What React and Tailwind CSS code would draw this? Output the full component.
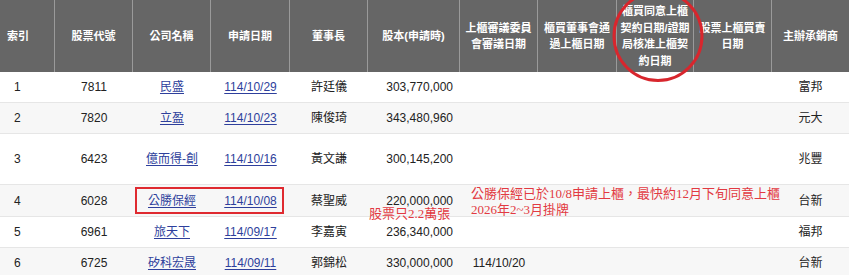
import React from "react";

const grid =
  "grid grid-cols-[55px_78px_78px_79px_78px_92px_78px_79px_77px_78px_77px]";

const headers = [
  ["索引"],
  ["股票代號"],
  ["公司名稱"],
  ["申請日期"],
  ["董事長"],
  ["股本(申請時)"],
  ["上櫃審議委員", "會審議日期"],
  ["櫃買董事會通", "過上櫃日期"],
  ["櫃買同意上櫃", "契約日期/證期", "局核准上櫃契", "約日期"],
  ["股票上櫃買賣", "日期"],
  ["主辦承銷商"],
];

const rows = [
  { idx: 1, code: "7811", name: "民盛", date: "114/10/29", chair: "許廷儀", cap: "303,770,000", review: "", uw: "富邦", h: "h-[31px]", bg: "bg-white" },
  { idx: 2, code: "7820", name: "立盈", date: "114/10/23", chair: "陳俊琦", cap: "343,480,960", review: "", uw: "元大", h: "h-[31px]", bg: "bg-[#f7f7f7]" },
  { idx: 3, code: "6423", name: "億而得-創", date: "114/10/16", chair: "黃文謙", cap: "300,145,200", review: "", uw: "兆豐", h: "h-[51px]", bg: "bg-white" },
  { idx: 4, code: "6028", name: "公勝保經", date: "114/10/08", chair: "蔡聖威", cap: "220,000,000", review: "", uw: "台新", h: "h-[32px]", bg: "bg-[#f7f7f7]" },
  { idx: 5, code: "6961", name: "旅天下", date: "114/09/17", chair: "李嘉寅", cap: "236,340,000", review: "", uw: "福邦", h: "h-[31px]", bg: "bg-white" },
  { idx: 6, code: "6725", name: "矽科宏晟", date: "114/09/11", chair: "郭錦松", cap: "330,000,000", review: "114/10/20", uw: "台新", h: "h-[31px]", bg: "bg-[#f7f7f7]" },
];

const Cell = ({ children, align = "justify-center" }) => (
  <div className={`flex items-center ${align}`}>{children}</div>
);

const Link = ({ children }) => (
  <span className="text-[#2e3f9c] underline underline-offset-2">{children}</span>
);

export default function App() {
  return (
    <div
      className="relative w-[849px] h-[275px] overflow-hidden bg-white text-[12px] text-[#222]"
      style={{ fontFamily: '"Liberation Sans", "Noto Sans CJK TC", sans-serif' }}
    >
      {/* header */}
      <div className={`${grid} h-[72px] bg-[#666666] text-white font-bold text-[11px] leading-[16.5px]`}>
        {headers.map((lines, i) => (
          <div
            key={i}
            className={`flex flex-col justify-center ${
              i === 0 ? "items-start pl-[7px]" : "items-center text-center"
            } ${i < headers.length - 1 ? "border-r border-[#9a9a9a]" : ""}`}
          >
            {lines.map((l) => (
              <span key={l}>{l}</span>
            ))}
          </div>
        ))}
      </div>

      {/* body */}
      {rows.map((r) => (
        <div key={r.idx} className={`${grid} ${r.h} ${r.bg} border-b border-[#e6e6e6]`}>
          <Cell align="justify-start pl-[14px]">{r.idx}</Cell>
          <Cell>{r.code}</Cell>
          <Cell>
            <Link>{r.name}</Link>
          </Cell>
          <Cell>
            <Link>{r.date}</Link>
          </Cell>
          <Cell>{r.chair}</Cell>
          <Cell align="justify-end pr-[7px]">{r.cap}</Cell>
          <Cell>{r.review}</Cell>
          <Cell />
          <Cell />
          <Cell />
          <Cell>{r.uw}</Cell>
        </div>
      ))}

      {/* annotations drawn over the table */}
      <div className="absolute left-[135px] top-[187px] w-[149px] h-[27px] border-2 border-[#df2a30]" />
      <svg
        className="absolute left-[608px] top-[-14px]"
        width="100"
        height="100"
        viewBox="0 0 100 100"
      >
        <ellipse cx="50" cy="50" rx="44" ry="44.5" fill="none" stroke="#d8262d" strokeWidth="3" />
      </svg>
      <div
        className="absolute left-[471px] top-[186px] text-[13px] leading-[16px] text-[#e23a42] whitespace-nowrap"
        style={{ fontFamily: '"Liberation Serif", "Noto Sans CJK TC", serif' }}
      >
        <div>公勝保經已於10/8申請上櫃，最快約12月下旬同意上櫃</div>
        <div>2026年2~3月掛牌</div>
      </div>
      <div
        className="absolute left-[369px] top-[206px] text-[13px] leading-[16px] text-[#e23a42] whitespace-nowrap"
        style={{ fontFamily: '"Liberation Serif", "Noto Sans CJK TC", serif' }}
      >
        股票只2.2萬張
      </div>
    </div>
  );
}
